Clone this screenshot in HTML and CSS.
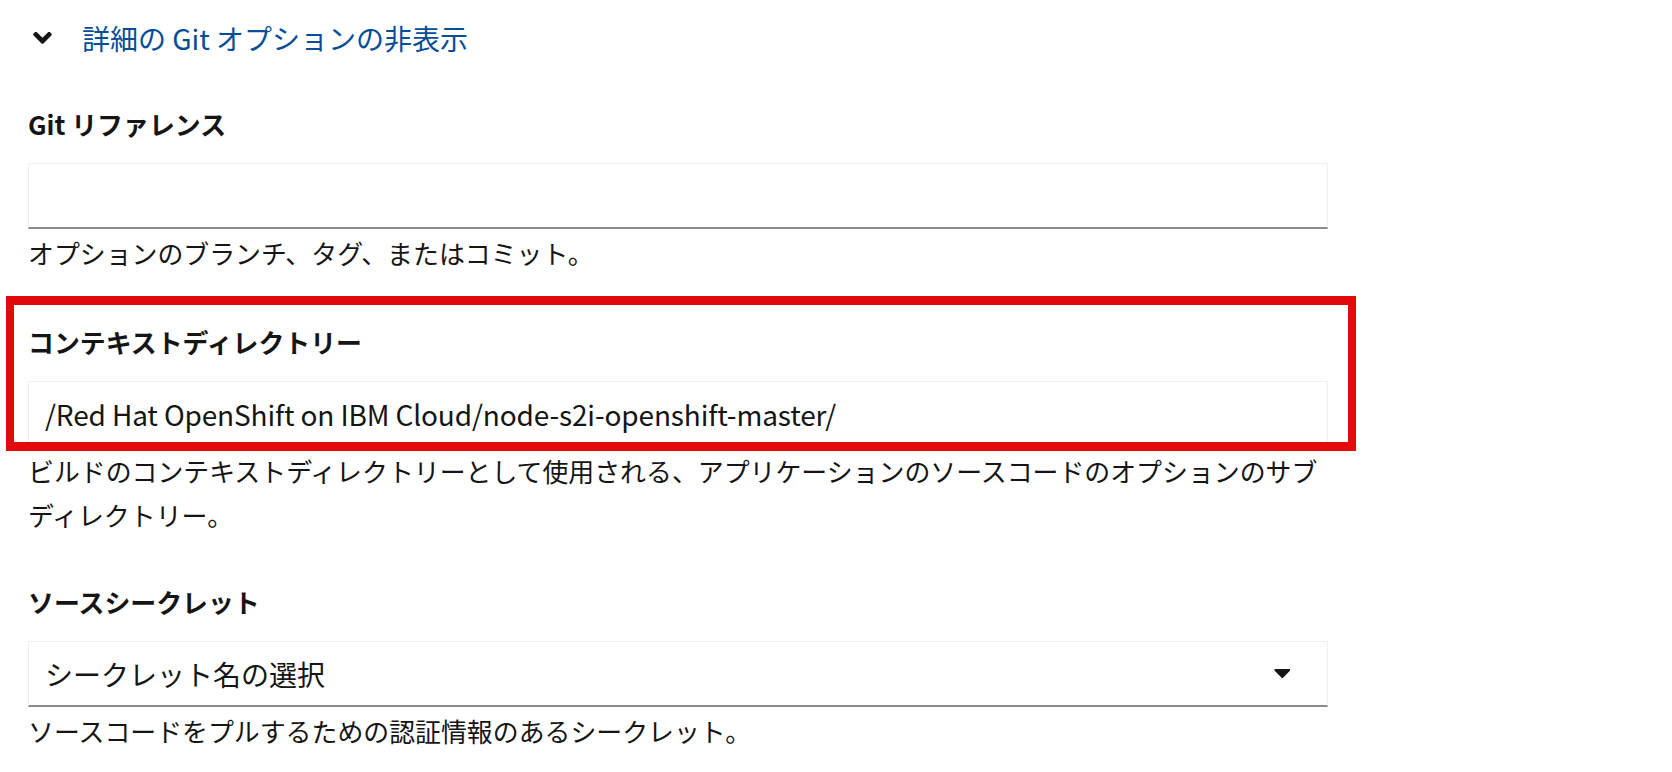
FILE: index.html
```html
<!DOCTYPE html>
<html lang="ja">
<head>
<meta charset="utf-8">
<title>詳細の Git オプション</title>
<link rel="stylesheet" href="styles.css">
</head>
<body>
<div class="page">
  <button class="toggle" type="button">
    <svg class="toggle-icon" viewBox="0 155 320 207" aria-hidden="true"><path d="M143 352.3L7 216.3c-9.4-9.4-9.4-24.6 0-33.9l22.6-22.6c9.4-9.4 24.6-9.4 33.9 0l96.4 96.4 96.4-96.4c9.4-9.4 24.6-9.4 33.9 0l22.6 22.6c9.4 9.4 9.4 24.6 0 33.9l-136 136c-9.2 9.4-24.4 9.4-33.8 0z"/></svg>
    <span class="toggle-text">詳細の Git オプションの非表示</span>
  </button>

  <form class="form">
    <div class="group">
      <label class="label" for="git-ref">Git リファレンス</label>
      <input class="control" id="git-ref" type="text">
      <div class="helper">オプションのブランチ、タグ、またはコミット。</div>
    </div>

    <div class="group">
      <div class="highlight-area">
        <label class="label" for="ctx-dir">コンテキストディレクトリー</label>
        <input class="control" id="ctx-dir" type="text" value="/Red Hat OpenShift on IBM Cloud/node-s2i-openshift-master/">
        <div class="highlight"></div>
      </div>
      <div class="helper">ビルドのコンテキストディレクトリーとして使用される、アプリケーションのソースコードのオプションのサブディレクトリー。</div>
    </div>

    <div class="group group-last">
      <div class="label">ソースシークレット</div>
      <div class="select">
        <span class="select-text">シークレット名の選択</span>
        <svg class="caret" viewBox="4 192 300 168" aria-hidden="true"><path d="M31.3 192h257.3c17.8 0 26.7 21.5 14.1 34.1L174.1 354.8c-7.8 7.8-20.5 7.8-28.3 0L17.2 226.1C4.6 213.5 13.5 192 31.3 192z"/></svg>
      </div>
      <div class="helper">ソースコードをプルするための認証情報のあるシークレット。</div>
    </div>
  </form>
</div>
</body>
</html>
```

FILE: styles.css
```css
html, body {
  margin: 0;
  padding: 0;
  background: #ffffff;
}

body {
  font-family: "Noto Sans CJK JP", "Noto Sans", sans-serif;
  color: #151515;
}

.page {
  padding: 17px 0 0 28px;
}

.toggle {
  display: flex;
  align-items: center;
  height: 42px;
  padding: 0;
  margin: 0;
  border: 0;
  background: none;
  cursor: pointer;
  font-family: inherit;
}

.toggle-icon {
  width: 19px;
  height: 12px;
  margin-left: 5px;
  margin-right: 30px;
  fill: #151515;
}

.toggle-text {
  font-size: 28px;
  line-height: 42px;
  color: #084d96;
}

.form {
  width: 1300px;
  margin-top: 47px;
}

.group + .group {
  margin-top: 49px;
}

.group + .group-last {
  margin-top: 47px;
}

.label {
  display: block;
  font-size: 25.9px;
  font-weight: 700;
  line-height: 36px;
  margin-bottom: 21px;
  color: #151515;
}

.control {
  display: block;
  box-sizing: border-box;
  width: 100%;
  height: 66px;
  margin: 0;
  padding: 0 16px;
  border: 1px solid #f0f0f0;
  border-bottom: 2px solid #8a8d90;
  border-radius: 0;
  background: #ffffff;
  font-family: "Noto Sans CJK JP", "Noto Sans", sans-serif;
  font-size: 28px;
  letter-spacing: -0.14px;
  color: #151515;
  outline: none;
}

.helper {
  margin-top: 2px;
  font-size: 25.9px;
  line-height: 44px;
  color: #151515;
}

.highlight-area {
  position: relative;
}

.highlight {
  position: absolute;
  top: -28px;
  left: -22px;
  right: -28px;
  bottom: -4px;
  border-style: solid;
  border-color: #e20a0a;
  border-width: 9px 8px 9px 8px;
  pointer-events: none;
}

.select {
  display: flex;
  align-items: center;
  justify-content: space-between;
  box-sizing: border-box;
  height: 66px;
  padding: 0 37px 0 16px;
  border: 1px solid #f0f0f0;
  border-bottom: 2px solid #8a8d90;
  font-size: 28px;
  color: #151515;
}

.caret {
  width: 16px;
  height: 9px;
  fill: #151515;
}
```
